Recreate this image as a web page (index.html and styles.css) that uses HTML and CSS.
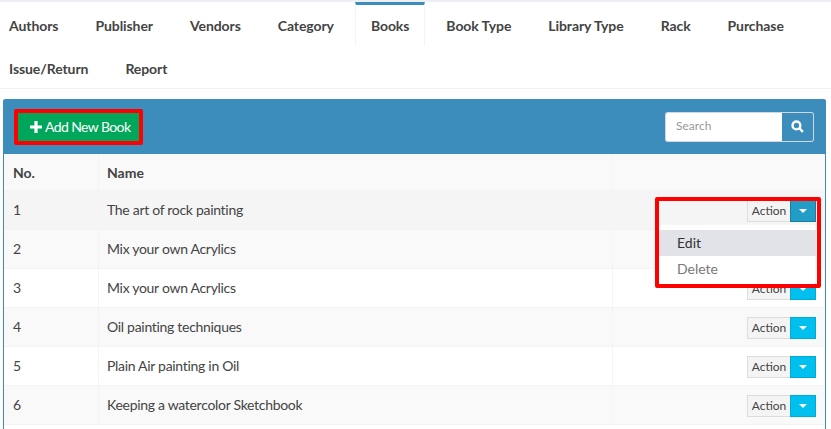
FILE: index.html
```html
<!DOCTYPE html>
<html lang="en">
<head>
<meta charset="utf-8">
<title>Books</title>
<link rel="stylesheet" href="styles.css">
</head>
<body>
<nav class="tabs">
  <a class="tab" href="#">Authors</a>
  <a class="tab" href="#">Publisher</a>
  <a class="tab" href="#">Vendors</a>
  <a class="tab" href="#">Category</a>
  <a class="tab active" href="#">Books</a>
  <a class="tab" href="#">Book Type</a>
  <a class="tab" href="#">Library Type</a>
  <a class="tab" href="#">Rack</a>
  <a class="tab" href="#">Purchase</a>
  <a class="tab" href="#">Issue/Return</a>
  <a class="tab" href="#">Report</a>
</nav>
<section class="panel">
  <header class="panel-head">
    <button class="add-btn" type="button">
      <svg class="plus" viewBox="0 0 12 12" aria-hidden="true"><path d="M4.4 0h3.2v4.4H12v3.2H7.6V12H4.4V7.6H0V4.4h4.4z"/></svg>Add New Book
    </button>
    <div class="search">
      <input class="search-input" type="text" placeholder="Search">
      <button class="search-btn" type="button" aria-label="Search">
        <svg viewBox="0 0 12 12" aria-hidden="true"><circle cx="5" cy="5" r="3.6"/><path d="M7.8 7.8 11 11"/></svg>
      </button>
    </div>
  </header>
  <table class="grid">
    <thead>
      <tr><th class="c-no">No.</th><th class="c-name">Name</th><th class="c-act"></th></tr>
    </thead>
    <tbody>
      <tr class="hover"><td>1</td><td>The art of rock painting</td><td class="act"><span class="split"><span class="lbl">Action</span><span class="caret-btn open"><i></i></span></span></td></tr>
      <tr><td>2</td><td>Mix your own Acrylics</td><td class="act"><span class="split"><span class="lbl">Action</span><span class="caret-btn"><i></i></span></span></td></tr>
      <tr><td>3</td><td>Mix your own Acrylics</td><td class="act"><span class="split"><span class="lbl">Action</span><span class="caret-btn"><i></i></span></span></td></tr>
      <tr><td>4</td><td>Oil painting techniques</td><td class="act"><span class="split"><span class="lbl">Action</span><span class="caret-btn"><i></i></span></span></td></tr>
      <tr><td>5</td><td>Plain Air painting in Oil</td><td class="act"><span class="split"><span class="lbl">Action</span><span class="caret-btn"><i></i></span></span></td></tr>
      <tr><td>6</td><td>Keeping a watercolor Sketchbook</td><td class="act"><span class="split"><span class="lbl">Action</span><span class="caret-btn"><i></i></span></span></td></tr>
    </tbody>
  </table>
  <div class="menu">
    <a class="menu-item on" href="#">Edit</a>
    <a class="menu-item" href="#">Delete</a>
  </div>
</section>
<div class="mark mark-add"></div>
<div class="mark mark-menu"></div>
</body>
</html>
```
FILE: styles.css
```css
* { box-sizing: border-box; }
html { height: 100%; overflow: hidden; }
body {
  margin: 0;
  height: 429px;
  overflow: hidden;
  position: relative;
  background: #fff;
  border-top: 2px solid #ecf0f5;
  font-family: "Lato", "Open Sans", sans-serif;
  font-size: 14px;
  color: #444;
}
.tabs {
  display: flex;
  flex-wrap: wrap;
  align-content: flex-start;
  margin-left: -7px;
  width: 838px;
  height: 87px;
  border-bottom: 1px solid #f0f0f0;
}
.tab {
  display: block;
  height: 44px;
  padding: 11px 15px 0;
  margin-right: 5px;
  border-top: 3px solid transparent;
  border-left: 1px solid transparent;
  border-right: 1px solid transparent;
  color: #444;
  font-size: 14px;
  font-weight: 700;
  letter-spacing: -0.08px;
  line-height: 19px;
  text-decoration: none;
  white-space: nowrap;
}
.tab:nth-child(n+10) { height: 42px; padding-top: 10px; }
.tab.active {
  border-top-color: #3c8dbc;
  border-left-color: #f4f4f4;
  border-right-color: #f4f4f4;
}
.panel {
  position: relative;
  margin: 10px 0 0 3px;
  width: 823px;
  height: 330px;
  border-radius: 3px 3px 0 0;
  border-left: 1px solid #3c8dbc;
  border-right: 1px solid #3c8dbc;
}
.panel-head {
  display: flex;
  justify-content: space-between;
  align-items: center;
  height: 55px;
  margin: 0 -1px;
  padding: 0 12px 0 14px;
  background: #3c8dbc;
  border-radius: 3px 3px 0 0;
}
.add-btn {
  display: flex;
  align-items: center;
  gap: 3px;
  width: 123px;
  height: 30px;
  padding: 0 0 0 13px;
  background: #00a65a;
  border: 0;
  color: #fff;
  font: 14px/20px "Lato", sans-serif;
  letter-spacing: -0.6px;
  white-space: nowrap;
}
.plus { flex: none; width: 12px; height: 12px; fill: #fff; }
.search { display: flex; width: 149px; height: 30px; }
.search-input {
  width: 117px;
  height: 30px;
  padding: 0 10px 2px;
  background: #fff;
  border: 1px solid #d2d6de;
  border-right: 0;
  border-radius: 3px 0 0 3px;
  font: 12px "Lato", sans-serif;
  color: #444;
}
.search-input::placeholder { color: #999; opacity: 1; }
.search-btn {
  display: flex;
  align-items: center;
  justify-content: center;
  width: 32px;
  height: 30px;
  padding: 0;
  background: #3c8dbc;
  border: 1px solid #d2d6de;
  border-left: 0;
  border-radius: 0 3px 3px 0;
}
.search-btn svg { width: 13px; height: 13px; fill: none; stroke: #fff; stroke-width: 2.2; }
.grid {
  width: 100%;
  border-collapse: separate;
  border-spacing: 0;
  table-layout: fixed;
}
.c-no { width: 95px; }
.c-act { width: 212px; }
.grid th, .grid td {
  padding: 0 0 2px 9px;
  height: 39px;
  text-align: left;
  border-right: 1px solid #f4f4f4;
  border-bottom: 1px solid #f4f4f4;
  font-size: 14px;
  letter-spacing: -0.3px;
  vertical-align: middle;
}
.grid th { height: 37px; padding-bottom: 0; background: #f9f9f9; font-weight: 700; letter-spacing: 0; color: #444; }
.grid th:nth-child(2), .grid td:nth-child(2) { padding-left: 8px; }
.grid td:last-child, .grid th:last-child { border-right: 0; }
.grid tbody tr:nth-child(even) td { background: #f9f9f9; }
.grid tbody tr:nth-child(odd) td { background: #fff; }
.grid tbody tr.hover td { background: #f5f5f5; }
.grid td.act { padding: 2px 9px 0 0; text-align: right; letter-spacing: 0; }
.split { display: inline-flex; height: 22px; vertical-align: middle; }
.lbl {
  display: block;
  width: 43px;
  height: 22px;
  background: #f4f4f4;
  border: 1px solid #ddd;
  border-right: 0;
  font-size: 12px;
  line-height: 20px;
  text-align: center;
  color: #444;
}
.caret-btn {
  display: flex;
  align-items: center;
  justify-content: center;
  width: 26px;
  height: 22px;
  background: #00c0ef;
  border: 1px solid #00acd6;
}
.caret-btn.open { background: #219dc7; border-color: #1a7f9f; }
.caret-btn i {
  display: block;
  border-top: 4px solid #fff;
  border-left: 4px solid transparent;
  border-right: 4px solid transparent;
}
.menu {
  position: absolute;
  top: 126px;
  left: 655px;
  width: 157px;
  height: 60px;
  padding-top: 5px;
  background: #fff;
  border-radius: 3px;
}
.menu-item {
  display: block;
  height: 26px;
  padding-left: 18px;
  font-size: 14px;
  line-height: 26px;
  color: #777;
  text-decoration: none;
}
.menu-item.on { background: #e1e3e9; color: #333; }
.mark { position: absolute; border: 4px solid #f00; border-radius: 2px; }
.mark-add { left: 14px; top: 107px; width: 129px; height: 36px; }
.mark-menu { left: 655px; top: 195px; width: 166px; height: 91px; }
```
